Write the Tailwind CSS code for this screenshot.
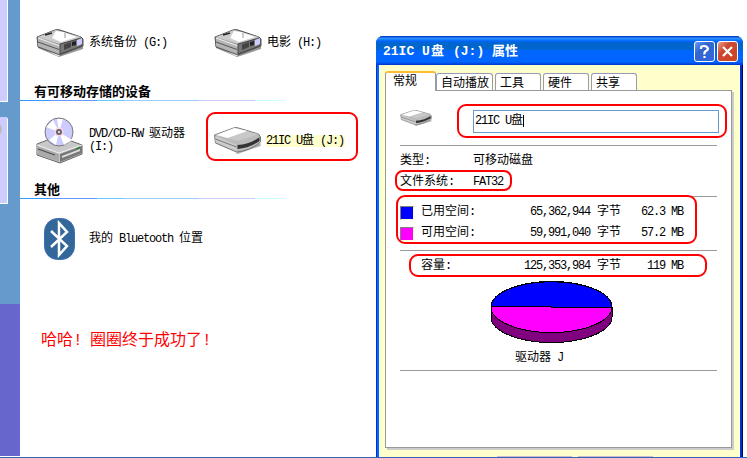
<!DOCTYPE html>
<html lang="zh-CN">
<head>
<meta charset="utf-8">
<title>21IC U盘 (J:) 属性</title>
<script src="https://cdn.jsdelivr.net/npm/@tailwindcss/browser@4"></script>
</head>
<body class="w-[747px] h-[458px] overflow-hidden bg-white text-black text-[12px] leading-[12px] font-['Liberation_Mono','Noto_Sans_CJK_SC',monospace] whitespace-nowrap">
<svg class="hidden"><defs>
<symbol id="disk" viewBox="0 0 48 28">
<path d="M2 17 22 27 47 17 47 20 23 28 2 19z" fill="#999"/>
<path d="M1 8 19 1 Q21 0 24 1L45 8 47 10V17L24 26 2 18z" fill="#999" stroke="#555"/>
<path d="M2 8 20 1 45 8 24 15z" fill="#ccc"/><path d="M16 9 20 2 27 3 41 8 25 13z" fill="#fff"/>
<path d="M2 8 24 16V25L2 17z" fill="#b4b4b4"/><path d="M2 9 24 17" stroke="#eee"/><path d="M2 13 23 20.500" stroke="#555"/><path d="M24 15 46 9V17L24 25z" fill="#777" stroke="#444"/>
<path d="M28 15.500 35 13V18L28 21z" fill="#444"/><path d="M36 13 40 12V16L36 17z" fill="#222"/><path d="M41 11 46 9V15L41 17z" fill="#ccf"/><path d="M9 6 16 4" stroke="#222" stroke-width="1.500"/><path d="M29 4V9" stroke="#999"/>
</symbol>
<symbol id="usb" viewBox="0 0 48 27">
<path d="M3 17 22 26 47 16V19L24 27z" fill="#aaa"/>
<path d="M1 8 20 1Q22 0 25 1L45 7 47 10V15Q36 24 23 25L2 16z" fill="#bbb" stroke="#777"/>
<path d="M2 8 21 1 45 7 25 14z" fill="#c8c8c8"/><path d="M3 8 21 1 34 4 14 11z" fill="#fff"/>
<path d="M2 9 23 18V24L2 15z" fill="#ccc"/><path d="M2 12 23 20" stroke="#777"/>
<path d="M24 18Q37 17 46 10V14Q36 21 24 22z" fill="#333"/>
</symbol>
</defs></svg>
<div class="relative w-[747px] h-[458px] flex">
  <aside class="w-[20px] h-[456px] shrink-0 bg-[#6699cc] flex flex-col">
    <div class="w-[8px] h-[102px] bg-[#ccccff] border-r border-b border-white"></div>
    <div class="w-[8px] h-[87px] mt-[15px] bg-[#ccccff] border-r border-b border-white rounded-tr-[3px] overflow-hidden"><div class="size-[14px] mt-[5px] -ml-[12px] rounded-full border-2 border-[#bbb] bg-white"></div></div>
    <div class="h-[152px] mt-auto bg-[#6666cc]"></div>
  </aside>
  <main class="w-[356px] shrink-0 flex flex-col">
    <div class="flex h-[84px] pt-[29px] pl-[16px]">
      <div class="w-[178px] flex gap-[5px] h-[28px] items-center"><svg class="w-[48px] h-[28px]"><use href="#disk"/></svg><span>系统备份<span class="tracking-[-1.2px]"> (G:)</span></span></div>
      <div class="flex gap-[5px] h-[28px] items-center"><svg class="w-[48px] h-[28px]"><use href="#disk"/></svg><span>电影<span class="tracking-[-1.2px]"> (H:)</span></span></div>
    </div>
    <h2 class="h-[16px] pl-[14px] text-[13px] leading-[17px] font-bold">有可移动存储的设备</h2>
    <div class="h-px w-[265px] bg-[linear-gradient(90deg,#3399ff_30px,#6699ff_30px_77px,#66ccff_77px_104px,#99ccff_104px_178px,#ccccff_178px_235px,#ccffff_235px)]"></div>
    <div class="h-[81px] pt-[16px] pl-[16px] flex">
      <div class="w-[177px] flex gap-[5px]">
        <svg class="w-[48px] h-[48px]" viewBox="0 0 48 48"><path d="M1 27 22 19 46 28V37L24 46 1 38z" fill="#c8c8c8" stroke="#666"/><path d="M1 28 23 36 46 28" fill="none" stroke="#eee"/><path d="M1 29 23 37V45L1 37z" fill="#aaa"/><path d="M2 32 19 38" stroke="#444"/><path d="M24 37 46 29V36L24 45z" fill="#777"/><path d="M26 39 44 32V34L26 41z" fill="#ddd"/><path d="M40 32 44 30" stroke="#080"/>
        <circle cx="23" cy="15" r="14" fill="#ccf" stroke="#777"/><path d="M23 15 10 10 17 3zM23 15 36 23 28 28zM23 15 13 23 20 28z" fill="#fff"/><path d="M23 15 21 2 27 2z" fill="#fff"/><circle cx="23" cy="15" r="4.500" fill="#fcd5ea"/><circle cx="23" cy="15" r="3" fill="#666"/><circle cx="23" cy="15" r="1" fill="#fff"/></svg>
        <div class="mt-[11px]"><p class="h-[13px]"><span class="tracking-[-1.2px]">DVD/CD-RW </span>驱动器</p><p class="tracking-[-1.2px]">(I:)</p></div>
      </div>
      <div class="flex gap-[4px] h-[27px] mt-[10px] items-center"><svg class="w-[49px] h-[27px]"><use href="#usb"/></svg><span class="bg-[#ffffcc] h-[12px] w-[79px]"><span class="tracking-[-1.2px]">21IC U</span>盘<span class="tracking-[-1.2px]"> (J:)</span></span></div>
    </div>
    <h2 class="h-[16px] pl-[14px] text-[13px] leading-[17px] font-bold">其他</h2>
    <div class="h-px w-[265px] bg-[linear-gradient(90deg,#3399ff_30px,#6699ff_30px_77px,#66ccff_77px_104px,#99ccff_104px_178px,#ccccff_178px_235px,#ccffff_235px)]"></div>
    <div class="mt-[19px] pl-[24px] flex gap-[14px] h-[42px]">
      <svg class="w-[31px] h-[42px]" viewBox="0 0 31 42"><rect x=".5" y=".5" width="30" height="41" rx="13" fill="#336699" stroke="#3e6eb5"/><path d="M7 13 23 28 15 37V5L23 14 7 29" fill="none" stroke="#fff" stroke-width="2.500"/></svg>
      <p class="mt-[15px]">我的<span class="tracking-[-1.2px]"> Bluetooth </span>位置</p>
    </div>
    <p class="mt-[73px] pl-[21px] flex text-[16px] leading-[16px] text-[#ff0000]"><span>哈哈</span><span class="w-[17px]">!</span><span>圈圈终于成功了</span><span>!</span></p>
  </main>

  <section class="absolute left-[376px] top-[36px] w-[367px] h-[422px] rounded-t-[7px] overflow-hidden bg-[#0033cc] flex flex-col">
    <header class="h-[29px] shrink-0 pl-[7px] pr-[5px] pt-[2px] flex items-center bg-[linear-gradient(180deg,#0044cc_0_1px,#3399ff_2px,#0066ff_5px,#0066cc_7px,#0066cc_13px,#0066ff_15px,#0066ff_26px,#0033cc)] text-white text-[13px] font-bold">
      <h1 class="flex items-center pt-px"><span class="w-[48px]">21IC U</span><span class="w-[22px]">盘</span><span class="w-[30px]">(J:)</span><span class="pl-[9px]">属性</span></h1>
      <span class="ml-auto size-[21px] border border-white rounded-[3px] bg-[linear-gradient(135deg,#6699ff,#3366cc_35%,#3366dd)] flex items-center justify-center"><svg class="size-[19px]" viewBox="0 0 19 19" fill="none" stroke="#fff" stroke-width="2.200"><path d="M6 7V5.500Q6 4 9 4T13 6.500Q13 8 11 9T9.500 12.500M9.500 14V16"/></svg></span>
      <span class="ml-[2px] size-[21px] border border-white rounded-[3px] bg-[linear-gradient(135deg,#f0a088,#cc4933_35%,#cc4422)] flex items-center justify-center"><svg class="size-[19px]" viewBox="0 0 19 19" stroke="#fff" stroke-width="2.200"><path d="M5 5 14 14M14 5 5 14"/></svg></span>
    </header>
    <div class="flex-1 border-l border-l-[#0033cc] border-r border-r-[#000066]"><div class="h-full border-l-2 border-l-[#0066ff] border-r-2 border-r-[#0033cc] bg-[#ffffcc] pl-[6px] pt-[6px] flex flex-col">
      <nav class="relative flex h-[19px] items-end">
        <div class="relative z-10 w-[51px] h-[20px] -mb-px bg-white border-x border-[#999] border-t-2 border-t-[#ffbb33] rounded-t-[3px] pl-[7px] pt-[3px]">常规</div>
        <div class="w-[57px] h-[17px] bg-white border border-b-0 border-[#9999bb] rounded-t-[3px] pl-[4px] pt-[4px]">自动播放</div>
        <div class="ml-[2px] w-[46px] h-[17px] bg-white border border-b-0 border-[#9999bb] rounded-t-[3px] pl-[4px] pt-[4px]">工具</div>
        <div class="ml-[2px] w-[46px] h-[17px] bg-white border border-b-0 border-[#9999bb] rounded-t-[3px] pl-[4px] pt-[4px]">硬件</div>
        <div class="ml-[2px] w-[46px] h-[17px] bg-white border border-b-0 border-[#9999bb] rounded-t-[3px] pl-[4px] pt-[4px]">共享</div>
      </nav>
      <div class="w-[347px] h-[358px] shrink-0 bg-white border border-[#999] shadow-[2px_2px_0_#cccccc] pl-[14px] pr-[14px]">
        <div class="h-[54px] pt-[19px] flex justify-between"><svg class="w-[32px] h-[16px]" viewBox="0 0 48 27" preserveAspectRatio="none"><use href="#usb"/></svg>
          <div class="w-[246px] h-[23px] mr-[-2px] border border-[#6699cc] pl-px pt-[4px] flex"><span class="tracking-[-1.2px]">21IC U</span>盘<i class="w-px h-[12px] bg-black"></i></div></div>
        <div class="h-[51px] border-t border-[#999] pt-[9px]">
          <p class="flex h-[21px]"><span class="w-[73px]">类型:</span>可移动磁盘</p>
          <p class="flex h-[21px]"><span class="w-[73px]">文件系统:</span><span class="tracking-[-1.2px]">FAT32</span></p>
        </div>
        <div class="h-[54px] border-t border-[#999] pt-[9px]">
          <div class="flex h-[21px]"><i class="size-[14px] bg-[#0000ff] border border-t-[#808080] border-l-[#808080] border-[#ffffcc]"></i><span class="w-[92px] pl-[7px]">已用空间:</span><span class="w-[84px] text-right tracking-[-1.2px]">65,362,944</span><span class="pl-[7px]">字节</span><span class="w-[62px] text-right tracking-[-1.2px]">62.3 MB</span></div>
          <div class="flex h-[21px]"><i class="size-[14px] bg-[#ff00ff] border border-t-[#808080] border-l-[#808080] border-[#ffffcc]"></i><span class="w-[92px] pl-[7px]">可用空间:</span><span class="w-[84px] text-right tracking-[-1.2px]">59,991,040</span><span class="pl-[7px]">字节</span><span class="w-[62px] text-right tracking-[-1.2px]">57.2 MB</span></div>
        </div>
        <div class="h-[120px] border-t border-[#999] pt-[9px]">
          <div class="flex h-[21px] pl-[14px]"><span class="w-[92px] pl-[7px]">容量:</span><span class="w-[84px] text-right tracking-[-1.2px]">125,353,984</span><span class="pl-[7px]">字节</span><span class="w-[62px] text-right tracking-[-1.2px]">119 MB</span></div>
          <svg class="w-[123px] h-[63px] ml-[90px]" viewBox="0 0 123 63" shape-rendering="crispEdges"><path d="M1 26V36A60.500 25.500 0 0 0 122 36V26" fill="#800080" stroke="#000"/><ellipse cx="61.500" cy="26" rx="60.500" ry="25.500" fill="#ff00ff" stroke="#000"/><path d="M1 26A60.500 25.500 0 0 1 122 26.500H61.500V25.500H1z" fill="#0000ff" stroke="#000"/></svg>
          <p class="pl-[115px] mt-[8px]">驱动器<span class="tracking-[-1.2px]"> J</span></p>
        </div>
        <div class="border-t border-[#999]"></div>
      </div>
      <div class="mt-[8px] ml-[112px] flex gap-[6px]"><i class="w-[75px] h-[2px] bg-[#ccbbcc]"></i><i class="w-[75px] h-[2px] bg-[#ccbbcc]"></i></div>
    </div></div>
  </section>

  <i class="absolute left-[206px] top-[112px] w-[152px] h-[49px] border-2 border-[#ff0000] rounded-[9px]"></i>
  <i class="absolute left-[457px] top-[104px] w-[270px] h-[34px] border-2 border-[#ff0000] rounded-[9px]"></i>
  <i class="absolute left-[395px] top-[170px] w-[117px] h-[21px] border-2 border-[#ff0000] rounded-[8px]"></i>
  <i class="absolute left-[396px] top-[195px] w-[301px] h-[49px] border-2 border-[#ff0000] rounded-[9px]"></i>
  <i class="absolute left-[409px] top-[254px] w-[298px] h-[23px] border-2 border-[#ff0000] rounded-[9px]"></i>
  <i class="absolute left-0 top-[457px] w-[747px] h-px bg-[#3366bb]"></i>
</div>
</body>
</html>
